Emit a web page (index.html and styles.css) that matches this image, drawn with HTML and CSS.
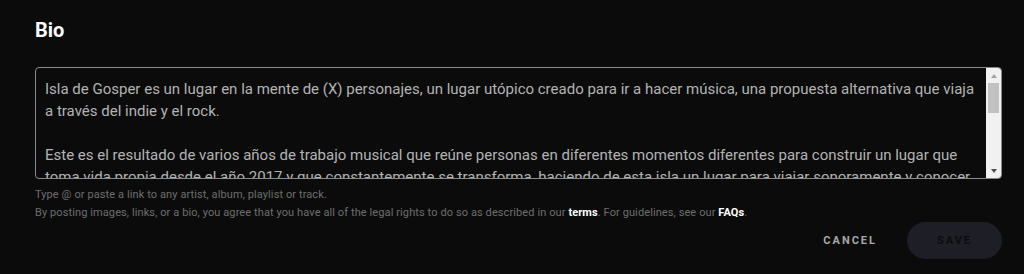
FILE: index.html
```html
<!DOCTYPE html>
<html lang="es">
<head>
<meta charset="utf-8">
<title>Bio</title>
<link rel="stylesheet" href="styles.css">
</head>
<body>
<main class="panel">
  <h2 class="title">Bio</h2>
  <div class="bio-box">
    <div class="bio-text" contenteditable="true" spellcheck="false">
      <p class="bio-para">Isla de Gosper es un lugar en la mente de (X) personajes, un lugar utópico creado para ir a hacer música, una propuesta alternativa que viaja a través del indie y el rock.</p>
      <p class="bio-para">Este es el resultado de varios años de trabajo musical que reúne personas en diferentes momentos diferentes para construir un lugar que toma vida propia desde el año 2017 y que constantemente se transforma, haciendo de esta isla un lugar para viajar sonoramente y conocer nuevos sonidos.</p>
    </div>
    <div class="scrollbar" aria-hidden="true">
      <span class="sb-btn"><span class="sb-arrow sb-up"></span></span>
      <span class="sb-thumb"></span>
      <span class="sb-track"></span>
      <span class="sb-btn"><span class="sb-arrow sb-down"></span></span>
    </div>
  </div>
  <p class="hint">Type @ or paste a link to any artist, album, playlist or track.</p>
  <p class="hint">By posting images, links, or a bio, you agree that you have all of the legal rights to do so as described in our <a class="hint-link" href="#">terms</a>. For guidelines, see our <a class="hint-link" href="#">FAQs</a>.</p>
  <div class="actions">
    <button class="btn btn-cancel" type="button">Cancel</button>
    <button class="btn btn-save" type="button">Save</button>
  </div>
</main>
</body>
</html>
```

FILE: styles.css
```css
html, body {
  margin: 0;
  padding: 0;
  background: #0b0b0b;
}

.panel {
  padding: 16px 22px 0 35px;
  font-family: Roboto, "Liberation Sans", sans-serif;
  display: flex;
  flex-direction: column;
}

.title {
  margin: 0;
  color: #ffffff;
  font-size: 20px;
  font-weight: 700;
  line-height: 28px;
}

.bio-box {
  margin-top: 23px;
  box-sizing: border-box;
  height: 112px;
  display: flex;
  border: 1px solid #8a8a8a;
  border-radius: 4px;
  overflow: hidden;
  background: #0b0b0b;
}

.bio-text {
  flex: 1;
  min-width: 0;
  padding: 10px 2px 0 9px;
  overflow: hidden;
  color: #b3b3b3;
  font-size: 15px;
  line-height: 22px;
  outline: none;
}

.bio-para {
  margin: 0 0 22px 0;
}

.scrollbar {
  width: 15px;
  flex: none;
  display: flex;
  flex-direction: column;
  background: #f1f1f1;
}

.sb-btn {
  height: 15px;
  flex: none;
  display: flex;
  align-items: center;
  justify-content: center;
}

.sb-arrow {
  width: 0;
  height: 0;
  border-left: 3.5px solid transparent;
  border-right: 3.5px solid transparent;
}

.sb-up {
  border-bottom: 4px solid #a3a3a3;
}

.sb-down {
  border-top: 4px solid #505050;
}

.sb-thumb {
  height: 30px;
  flex: none;
  margin: 0 2px;
  background: #c1c1c1;
}

.sb-track {
  flex: 1;
}

.hint {
  margin: 0;
  color: #6e6e6e;
  font-size: 11px;
  letter-spacing: 0.1px;
  line-height: 18px;
}

.hint:first-of-type {
  margin-top: 7px;
}

.hint-link {
  color: #ffffff;
  font-weight: 700;
  text-decoration: none;
}

.actions {
  display: flex;
  justify-content: flex-end;
  align-items: center;
  gap: 30px;
}

.btn {
  font-family: Roboto, "Liberation Sans", sans-serif;
  font-weight: 700;
  font-size: 11px;
  letter-spacing: 2px;
  text-transform: uppercase;
  border: none;
  cursor: pointer;
}

.btn-cancel {
  background: transparent;
  color: #a7a7a7;
  padding: 0;
}

.btn-save {
  background: #1e1e27;
  color: #0c0c0e;
  width: 95px;
  height: 37px;
  border-radius: 19px;
}
```
